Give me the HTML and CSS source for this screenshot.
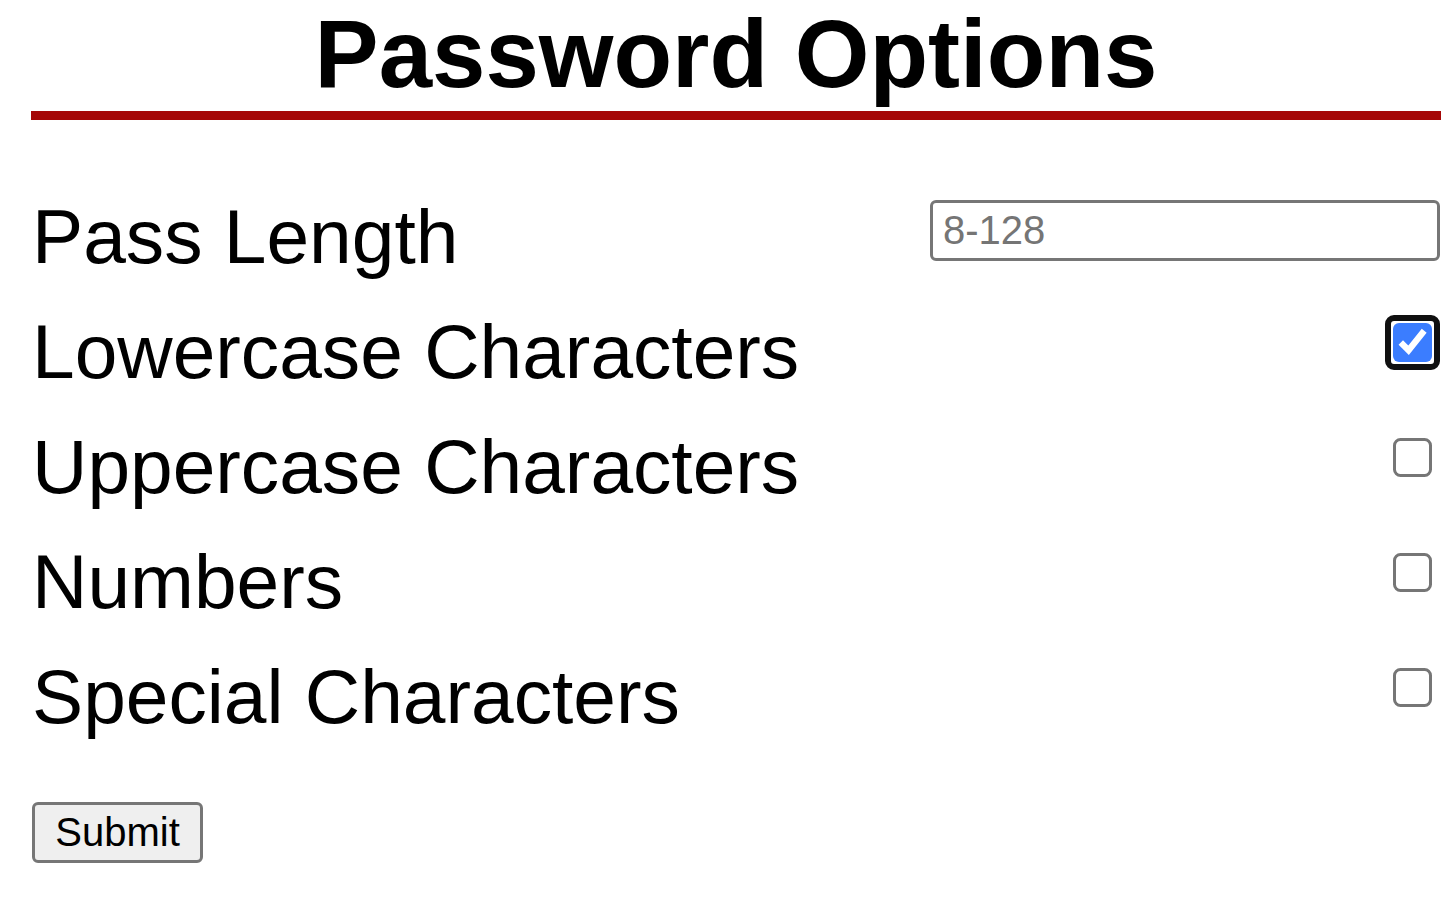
FILE: index.html
```html
<!DOCTYPE html>
<html lang="en">
<head>
<meta charset="utf-8">
<title>Password Options</title>
<link rel="stylesheet" href="styles.css">
</head>
<body>
<main class="page">
  <h1 class="title">Password Options</h1>
  <form class="options">
    <div class="row">
      <label class="label" for="len">Pass Length</label>
      <input class="text-input" id="len" type="text" placeholder="8-128">
    </div>
    <div class="row">
      <label class="label" for="lower">Lowercase Characters</label>
      <span class="focus-ring"><input class="check check-in-ring" id="lower" type="checkbox" checked></span>
    </div>
    <div class="row">
      <label class="label" for="upper">Uppercase Characters</label>
      <input class="check" id="upper" type="checkbox">
    </div>
    <div class="row">
      <label class="label" for="num">Numbers</label>
      <input class="check" id="num" type="checkbox">
    </div>
    <div class="row">
      <label class="label" for="spec">Special Characters</label>
      <input class="check" id="spec" type="checkbox">
    </div>
    <div class="actions">
      <button class="submit" type="button">Submit</button>
    </div>
  </form>
</main>
</body>
</html>
```

FILE: styles.css
```css
html, body {
  margin: 0;
  padding: 0;
  background: #ffffff;
}

body {
  font-family: "Liberation Sans", Arial, sans-serif;
  color: #000000;
}

.page {
  margin: 0 14px 0 31px;
}

.title {
  margin: 0;
  padding: 2px 0 5px;
  font-size: 96px;
  line-height: 104px;
  font-weight: bold;
  text-align: center;
  border-bottom: 9px solid #a50707;
}

.options {
  display: flex;
  flex-direction: column;
  gap: 23px;
  margin-top: 71px;
}

.row {
  display: flex;
  justify-content: space-between;
  align-items: flex-start;
}

.label {
  font-size: 76.7px;
  line-height: 92px;
  padding-left: 1px;
}

.text-input {
  box-sizing: border-box;
  width: 510px;
  height: 61px;
  margin: 9px 1px 0 0;
  padding: 0 10px;
  border: 3px solid #767676;
  border-radius: 6px;
  font-family: "Liberation Sans", Arial, sans-serif;
  font-size: 40px;
  color: #000;
  background: #fff;
}

.text-input::placeholder {
  color: #757575;
}

.check {
  zoom: 3;
  margin: 5.67px 3px 0 0;
  accent-color: #3b7dff;
}

.focus-ring {
  display: flex;
  padding: 2px;
  margin: 9px 1px 0 0;
  border: 6px solid #101010;
  border-radius: 9px;
  background: #fff;
}

.check.check-in-ring {
  margin: 0;
}

.actions {
  margin-top: 36px;
}

.submit {
  box-sizing: border-box;
  width: 171px;
  height: 61px;
  padding: 0 16px;
  border: 3px solid #767676;
  border-radius: 6px;
  background: #efefef;
  font-family: "Liberation Sans", Arial, sans-serif;
  font-size: 40px;
  color: #000;
  margin-left: 1px;
}
```
